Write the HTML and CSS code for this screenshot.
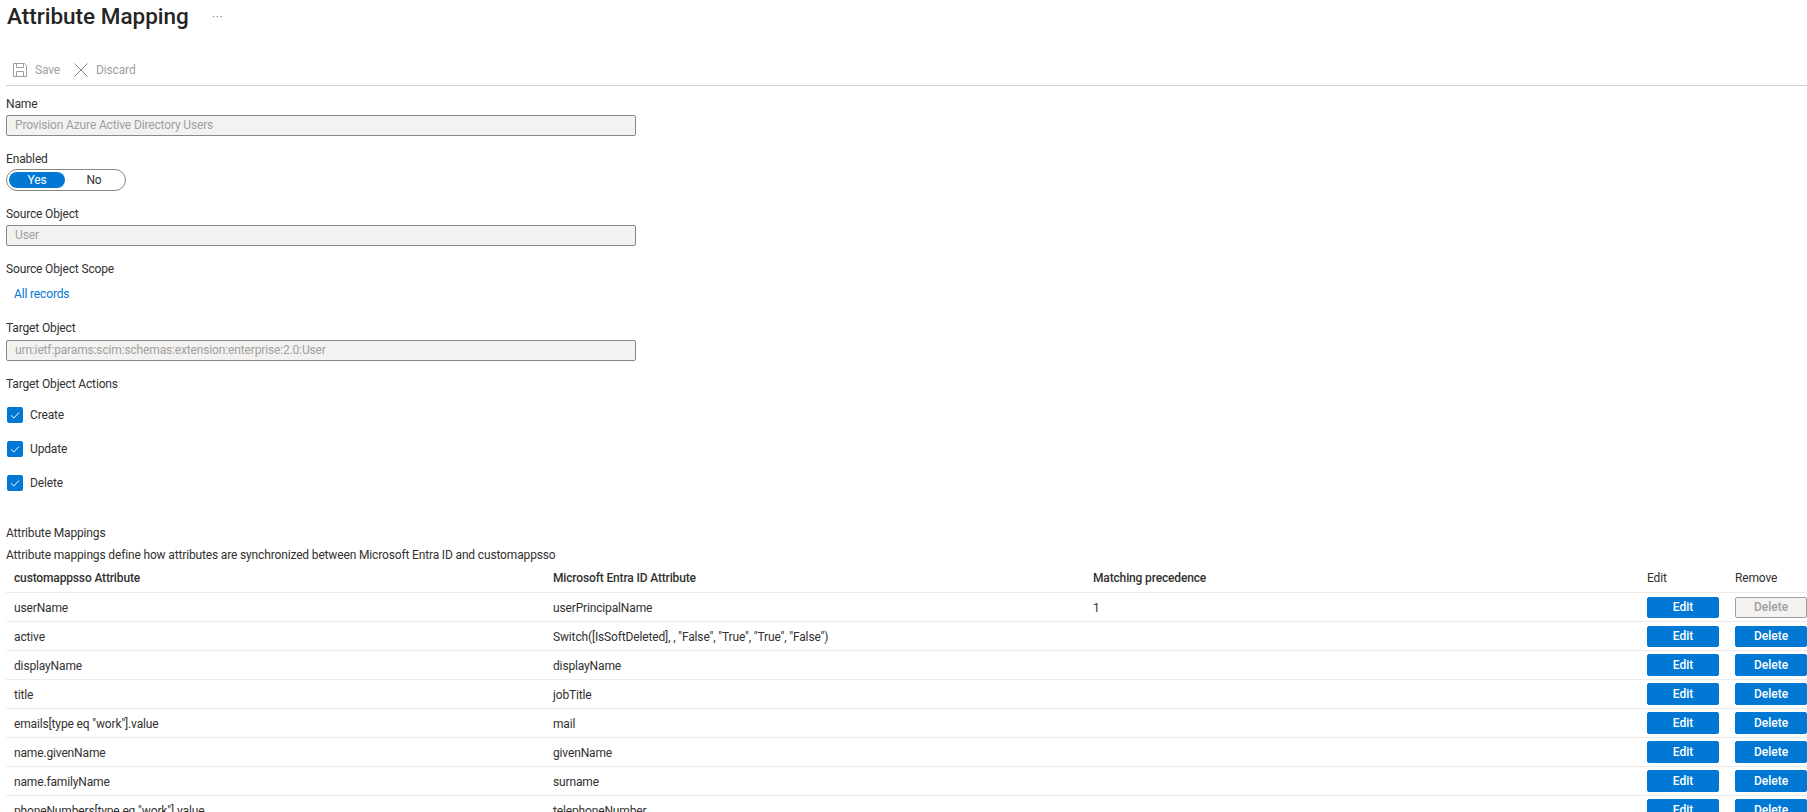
FILE: index.html
```html
<!DOCTYPE html>
<html lang="en">
<head>
<meta charset="utf-8">
<title>Attribute Mapping</title>
<link rel="stylesheet" href="styles.css">
</head>
<body>
<header class="title-row">
  <h1 class="title">Attribute Mapping</h1>
  <span class="more">···</span>
</header>
<div class="toolbar">
  <span class="tool">
    <svg class="tool-icon" viewBox="0 0 14 14" width="14" height="14" fill="none" stroke="#a19f9d" stroke-width="1"><path d="M.5.5h11l2 2v11H.5z"/><path d="M3.5.5v4h7v-4"/><path d="M3.5 13.5v-5h7v5"/></svg>
    Save
  </span>
  <span class="tool">
    <svg class="tool-icon" viewBox="0 0 14 14" width="14" height="14" fill="none" stroke="#8a8886" stroke-width="1"><path d="M.5.5l13 13M13.5.5l-13 13"/></svg>
    Discard
  </span>
</div>
<main class="form">
  <div class="label l-name">Name</div>
  <div class="input">Provision Azure Active Directory Users</div>
  <div class="label l-enabled">Enabled</div>
  <div class="toggle"><span class="toggle-on">Yes</span><span class="toggle-off">No</span></div>
  <div class="label l-source">Source Object</div>
  <div class="input">User</div>
  <div class="label l-scope">Source Object Scope</div>
  <a class="link">All records</a>
  <div class="label l-target">Target Object</div>
  <div class="input">urn:ietf:params:scim:schemas:extension:enterprise:2.0:User</div>
  <div class="label l-actions">Target Object Actions</div>
  <div class="checks">
    <label class="check"><svg class="box" viewBox="0 0 16 16" width="16" height="16"><rect width="16" height="16" rx="2" fill="#0078d4"/><path d="M4 8.3l2.8 2.7L12 5.5" fill="none" stroke="#fff" stroke-width="1"/></svg>Create</label>
    <label class="check"><svg class="box" viewBox="0 0 16 16" width="16" height="16"><rect width="16" height="16" rx="2" fill="#0078d4"/><path d="M4 8.3l2.8 2.7L12 5.5" fill="none" stroke="#fff" stroke-width="1"/></svg>Update</label>
    <label class="check"><svg class="box" viewBox="0 0 16 16" width="16" height="16"><rect width="16" height="16" rx="2" fill="#0078d4"/><path d="M4 8.3l2.8 2.7L12 5.5" fill="none" stroke="#fff" stroke-width="1"/></svg>Delete</label>
  </div>
  <div class="label l-mappings">Attribute Mappings</div>
  <div class="label l-desc">Attribute mappings define how attributes are synchronized between Microsoft Entra ID and customappsso</div>
</main>
<section class="table">
  <div class="row head"><span>customappsso Attribute</span><span>Microsoft Entra ID Attribute</span><span>Matching precedence</span><span class="h-plain">Edit</span><span class="h-plain">Remove</span></div>
  <div class="row"><span>userName</span><span>userPrincipalName</span><span>1</span><button class="btn">Edit</button><button class="btn off">Delete</button></div>
  <div class="row"><span>active</span><span>Switch([IsSoftDeleted], , "False", "True", "True", "False")</span><span></span><button class="btn">Edit</button><button class="btn">Delete</button></div>
  <div class="row"><span>displayName</span><span>displayName</span><span></span><button class="btn">Edit</button><button class="btn">Delete</button></div>
  <div class="row"><span>title</span><span>jobTitle</span><span></span><button class="btn">Edit</button><button class="btn">Delete</button></div>
  <div class="row"><span>emails[type eq "work"].value</span><span>mail</span><span></span><button class="btn">Edit</button><button class="btn">Delete</button></div>
  <div class="row"><span>name.givenName</span><span>givenName</span><span></span><button class="btn">Edit</button><button class="btn">Delete</button></div>
  <div class="row"><span>name.familyName</span><span>surname</span><span></span><button class="btn">Edit</button><button class="btn">Delete</button></div>
  <div class="row"><span>phoneNumbers[type eq "work"].value</span><span>telephoneNumber</span><span></span><button class="btn">Edit</button><button class="btn">Delete</button></div>
</section>
</body>
</html>
```
FILE: styles.css
```css
html, body {
  margin: 0;
  height: 812px;
  overflow: hidden;
  background: #fff;
}
body {
  font-family: Roboto, "Noto Sans", sans-serif;
  font-size: 12px;
  letter-spacing: -0.15px;
  color: #323130;
}
.title-row {
  height: 32px;
  display: flex;
  align-items: center;
  padding-left: 7px;
}
.title {
  margin: 0;
  flex: 0 0 205px;
  white-space: nowrap;
  font-size: 22.5px;
  font-weight: 500;
  letter-spacing: 0;
  color: #252423;
}
.more {
  font-size: 11px;
  color: #605e5c;
  letter-spacing: 1px;
  padding-top: 2px;
}
.toolbar {
  margin-top: 22px;
  margin-left: 6px;
  height: 31px;
  border-bottom: 1px solid #d2d0ce;
  display: flex;
  align-items: center;
  padding-left: 7px;
  gap: 14px;
  color: #a19f9d;
}
.tool {
  display: flex;
  align-items: center;
  gap: 8px;
}
.form {
  padding-left: 6px;
}
.label {
  line-height: 18px;
  height: 18px;
}
.l-name { margin-top: 9px; margin-bottom: 2px; }
.l-enabled { margin-top: 14px; margin-bottom: 1px; }
.l-source { margin-top: 14px; margin-bottom: 2px; }
.l-scope { margin-top: 14px; }
.l-target { margin-top: 16px; margin-bottom: 3px; }
.l-actions { margin-top: 14px; }
.l-mappings { margin-top: 33px; }
.l-desc { margin-top: 4px; }
.input {
  box-sizing: border-box;
  width: 630px;
  height: 21px;
  line-height: 19px;
  border: 1px solid #8a8886;
  border-radius: 2px;
  background: #f3f2f1;
  color: #a19f9d;
  padding-left: 8px;
}
.toggle {
  box-sizing: border-box;
  width: 120px;
  height: 22px;
  border: 1px solid #8a8886;
  border-radius: 11px;
  padding: 2px;
  display: flex;
  line-height: 16px;
}
.toggle-on {
  width: 56px;
  height: 16px;
  background: #0078d4;
  color: #fff;
  border-radius: 8px;
  text-align: center;
}
.toggle-off {
  flex: 1;
  text-align: center;
}
.link {
  display: block;
  margin-top: 7px;
  padding-left: 8px;
  line-height: 18px;
  color: #0078d4;
}
.checks {
  margin-top: 14px;
  display: flex;
  flex-direction: column;
  gap: 18px;
  padding-left: 1px;
}
.check {
  display: flex;
  align-items: center;
  gap: 7px;
  height: 16px;
}
.table {
  margin-left: 6px;
}
.row {
  box-sizing: border-box;
  height: 29px;
  display: grid;
  grid-template-columns: 539px 540px 554px 88px 72px;
  padding-left: 8px;
  align-items: center;
  border-bottom: 1px solid #edebe9;
}
.row span {
  padding-top: 2px;
}
.head span {
  padding-top: 0;
}
.head {
  font-weight: 500;
  color: #323130;
}
.h-plain {
  font-weight: 400;
}
.btn {
  font: inherit;
  font-weight: 500;
  letter-spacing: 0;
  height: 21px;
  line-height: 19px;
  width: 72px;
  padding: 0;
  border: 1px solid #0078d4;
  border-radius: 2px;
  background: #0078d4;
  color: #fff;
}
.row:nth-child(n+4) .btn {
  height: 22px;
}
.off {
  background: #f3f2f1;
  border-color: #a19f9d;
  color: #a19f9d;
}
```
